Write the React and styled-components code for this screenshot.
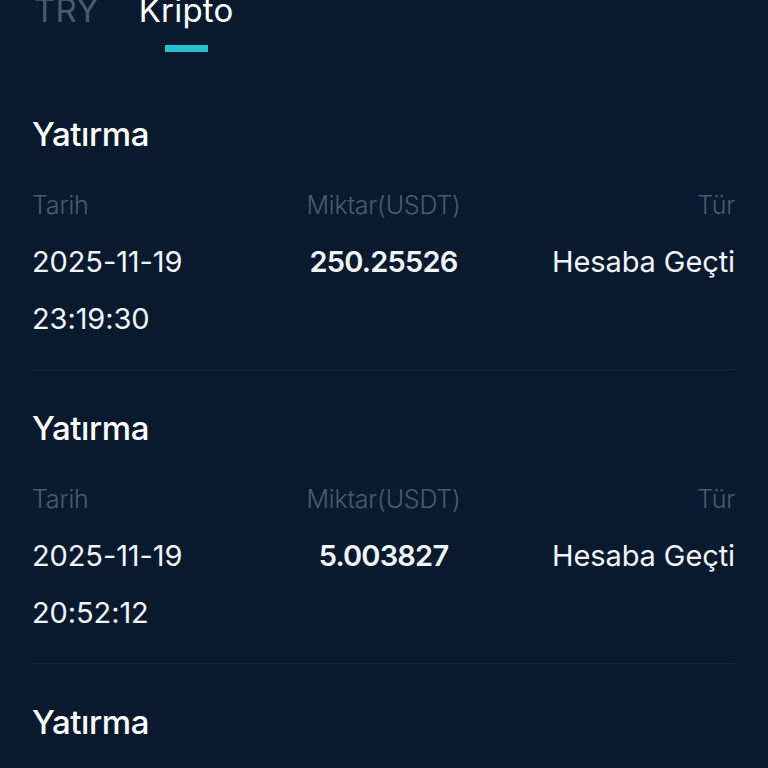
import styled, { createGlobalStyle } from "styled-components";

const GlobalStyle = createGlobalStyle`
  html, body {
    margin: 0;
    padding: 0;
    background: #091a2f;
    overflow: hidden;
  }
  body {
    font-family: Inter, Roboto, "Liberation Sans", sans-serif;
    color: #f2f5f8;
  }
`;

const Page = styled.div`
  width: 768px;
  height: 768px;
  background: #091a2f;
  overflow: hidden;
  box-sizing: border-box;
  padding: 0 33px 0 32px;
`;

const TabBar = styled.div`
  display: flex;
  gap: 40px;
  margin-top: -10px;
  padding-left: 2px;
`;

const Tab = styled.div`
  display: flex;
  flex-direction: column;
  align-items: center;
  font-size: 33px;
  line-height: 40px;
  letter-spacing: 0.2px;
  color: ${(p) => (p.$active ? "#ffffff" : "#4a5a6e")};
`;

const Underline = styled.div`
  width: 43px;
  height: 7px;
  margin-top: 15px;
  background: ${(p) => (p.$show ? "#26c3cf" : "transparent")};
`;

const List = styled.div`
  margin-top: 24px;
`;

const Record = styled.section`
  padding: 38px 0 22px;
  border-bottom: 1px solid #112339;
`;

const Title = styled.h2`
  margin: 0 0 33px;
  font-size: 33px;
  line-height: 40px;
  font-weight: 500;
  color: #ffffff;
  letter-spacing: -0.4px;
`;

const Grid = styled.div`
  display: grid;
  grid-template-columns: 1fr 1fr 1fr;
  align-items: start;
`;

const Head = styled.div`
  font-size: 25px;
  line-height: 36px;
  font-weight: 300;
  color: #4a5a6e;
  letter-spacing: -0.2px;
  text-align: ${(p) => p.$align || "left"};
  margin-bottom: 10px;
`;

const Cell = styled.div`
  font-size: 29px;
  line-height: 57px;
  font-weight: ${(p) => (p.$bold ? 600 : 400)};
  color: #f2f5f8;
  text-align: ${(p) => p.$align || "left"};
  letter-spacing: ${(p) => (p.$bold ? "-0.8px" : "-0.1px")};
`;

const records = [
  { date: "2025-11-19", time: "23:19:30", amount: "250.25526", type: "Hesaba Geçti" },
  { date: "2025-11-19", time: "20:52:12", amount: "5.003827", type: "Hesaba Geçti" },
  { date: "2025-11-19", time: "18:04:47", amount: "100.00000", type: "Hesaba Geçti" },
];

export default function App() {
  return (
    <Page>
      <GlobalStyle />
      <TabBar>
        <Tab>
          TRY
          <Underline />
        </Tab>
        <Tab $active>
          Kripto
          <Underline $show />
        </Tab>
      </TabBar>
      <List>
        {records.map((r, i) => (
          <Record key={i}>
            <Title>Yatırma</Title>
            <Grid>
              <Head>Tarih</Head>
              <Head $align="center">Miktar(USDT)</Head>
              <Head $align="right">Tür</Head>
              <Cell>
                {r.date}
                <br />
                {r.time}
              </Cell>
              <Cell $bold $align="center">{r.amount}</Cell>
              <Cell $align="right">{r.type}</Cell>
            </Grid>
          </Record>
        ))}
      </List>
    </Page>
  );
}
